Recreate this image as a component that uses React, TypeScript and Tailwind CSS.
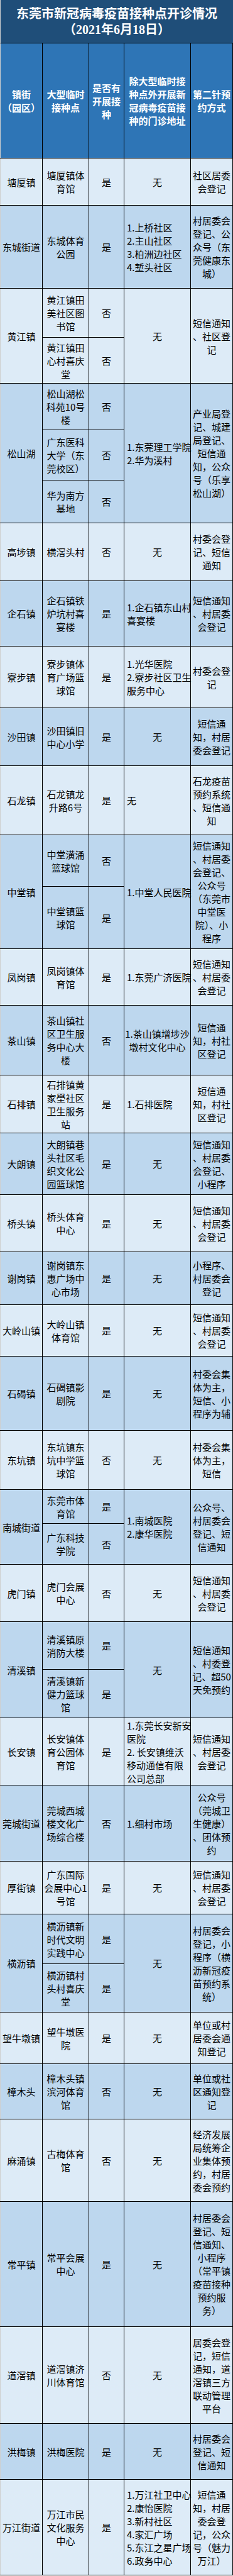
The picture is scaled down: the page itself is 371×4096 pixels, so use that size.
import React from "react";

type Sub = { lines: string[]; open: string; h?: string };
type Town = {
  name: string;
  h: string;
  subs: Sub[];
  addr: string[];
  align?: "left" | "center";
  book: string[];
};

const NONE = ["无"];

const TOWNS: Town[] = [
  { name: "塘厦镇", h: "h-[75px]", subs: [{ lines: ["塘厦镇体", "育馆"], open: "是" }], addr: NONE, book: ["社区居委", "会登记"] },
  {
    name: "东城街道",
    h: "h-[132px]",
    subs: [{ lines: ["东城体育", "公园"], open: "是" }],
    addr: ["1.上桥社区", "2.主山社区", "3.柏洲边社区", "4.堑头社区"],
    align: "left",
    book: ["村居委会", "登记、公", "众号（东", "莞健康东", "城）"],
  },
  {
    name: "黄江镇",
    h: "h-[151px]",
    subs: [
      { lines: ["黄江镇田", "美社区图", "书馆"], open: "否", h: "h-[78px]" },
      { lines: ["黄江镇田", "心村喜庆", "堂"], open: "否" },
    ],
    addr: NONE,
    book: ["短信通知", "、社区登", "记"],
  },
  {
    name: "松山湖",
    h: "h-[222px]",
    subs: [
      { lines: ["松山湖松", "科苑10号", "楼"], open: "否", h: "h-[74px]" },
      { lines: ["广东医科", "大学（东", "莞校区）"], open: "否", h: "h-[80px]" },
      { lines: ["华为南方", "基地"], open: "否" },
    ],
    addr: ["1.东莞理工学院", "2.华为溪村"],
    align: "left",
    book: ["产业局登", "记、城建", "局登记、", "短信通", "知，公众", "号（乐享", "松山湖）"],
  },
  { name: "高埗镇", h: "h-[92px]", subs: [{ lines: ["横滘头村"], open: "否" }], addr: NONE, book: ["村委会登", "记、短信", "通知"] },
  {
    name: "企石镇",
    h: "h-[104px]",
    subs: [{ lines: ["企石镇铁", "炉坑村喜", "宴楼"], open: "是" }],
    addr: ["1.企石镇东山村", "喜宴楼"],
    align: "left",
    book: ["短信通知", "、村居委", "会登记"],
  },
  {
    name: "寮步镇",
    h: "h-[98px]",
    subs: [{ lines: ["寮步镇体", "育广场篮", "球馆"], open: "是" }],
    addr: ["1.光华医院", "2.寮步社区卫生", "服务中心"],
    align: "left",
    book: ["村委会登", "记"],
  },
  { name: "沙田镇", h: "h-[92px]", subs: [{ lines: ["沙田镇旧", "中心小学"], open: "是" }], addr: NONE, book: ["短信通", "知，村居", "委会登记"] },
  {
    name: "石龙镇",
    h: "h-[110px]",
    subs: [{ lines: ["石龙镇龙", "升路6号"], open: "是" }],
    addr: NONE,
    align: "left",
    book: ["石龙疫苗", "预约系统", "、短信通", "知"],
  },
  {
    name: "中堂镇",
    h: "h-[181px]",
    subs: [
      { lines: ["中堂潢涌", "篮球馆"], open: "否", h: "h-[82px]" },
      { lines: ["中堂镇篮", "球馆"], open: "是" },
    ],
    addr: ["1.中堂人民医院"],
    align: "left",
    book: ["短信通知", "、村居委", "会登记、", "公众号", "（东莞市", "中堂医", "院）、小", "程序"],
  },
  {
    name: "凤岗镇",
    h: "h-[90px]",
    subs: [{ lines: ["凤岗镇体", "育馆"], open: "是" }],
    addr: ["1.东莞广济医院"],
    align: "left",
    book: ["短信通知", "、村居委", "会登记"],
  },
  {
    name: "茶山镇",
    h: "h-[111px]",
    subs: [{ lines: ["茶山镇社", "区卫生服", "务中心大", "楼"], open: "否" }],
    addr: ["1.茶山镇增埗沙", "墩村文化中心"],
    book: ["短信通", "知，村社", "区登记"],
  },
  {
    name: "石排镇",
    h: "h-[92px]",
    subs: [{ lines: ["石排镇黄", "家壆社区", "卫生服务", "站"], open: "是" }],
    addr: ["1.石排医院"],
    align: "left",
    book: ["短信通", "知，村社", "区登记"],
  },
  {
    name: "大朗镇",
    h: "h-[98px]",
    subs: [{ lines: ["大朗镇巷", "头社区毛", "织文化公", "园篮球馆"], open: "是" }],
    addr: NONE,
    book: ["短信通知", "、村居委", "会登记、", "小程序"],
  },
  { name: "桥头镇", h: "h-[91px]", subs: [{ lines: ["桥头体育", "中心"], open: "是" }], addr: NONE, book: ["短信通知", "、村居委", "会登记"] },
  { name: "谢岗镇", h: "h-[84px]", subs: [{ lines: ["谢岗镇东", "惠广场中", "心市场"], open: "是" }], addr: NONE, book: ["小程序、", "村居委会", "登记"] },
  { name: "大岭山镇", h: "h-[82px]", subs: [{ lines: ["大岭山镇", "体育馆"], open: "是" }], addr: NONE, book: ["短信通知", "、村居委", "会登记"] },
  { name: "石碣镇", h: "h-[118px]", subs: [{ lines: ["石碣镇影", "剧院"], open: "是" }], addr: NONE, book: ["村委会集", "体为主，", "短信、小", "程序为辅"] },
  { name: "东坑镇", h: "h-[94px]", subs: [{ lines: ["东坑镇东", "坑中学篮", "球馆"], open: "否" }], addr: NONE, book: ["村委会集", "体为主，", "短信"] },
  {
    name: "南城街道",
    h: "h-[119px]",
    subs: [
      { lines: ["东莞市体", "育馆"], open: "是", h: "h-[54px]" },
      { lines: ["广东科技", "学院"], open: "否" },
    ],
    addr: ["1.南城医院", "2.康华医院"],
    align: "left",
    book: ["公众号、", "村居委会", "登记、短", "信通知"],
  },
  { name: "虎门镇", h: "h-[91px]", subs: [{ lines: ["虎门会展", "中心"], open: "否" }], addr: NONE, book: ["短信通知", "、村居委", "会登记"] },
  {
    name: "清溪镇",
    h: "h-[153px]",
    subs: [
      { lines: ["清溪镇原", "消防大楼"], open: "是", h: "h-[76px]" },
      { lines: ["清溪镇新", "健力篮球", "馆"], open: "是" },
    ],
    addr: NONE,
    book: ["短信通知", "、村委登", "记、超50", "天免预约"],
  },
  {
    name: "长安镇",
    h: "h-[107px]",
    subs: [{ lines: ["长安镇体", "育公园体", "育馆"], open: "是" }],
    addr: ["1.东莞长安新安", "医院", "2. 长安镇维沃", "移动通信有限", "公司总部"],
    align: "left",
    book: ["短信通知", "、村居委", "会登记"],
  },
  {
    name: "莞城街道",
    h: "h-[121px]",
    subs: [{ lines: ["莞城西城", "楼文化广", "场综合楼"], open: "否" }],
    addr: ["1.细村市场"],
    align: "left",
    book: ["公众号", "（莞城卫", "生健康）", "、团体预", "约"],
  },
  { name: "厚街镇", h: "h-[84px]", subs: [{ lines: ["广东国际", "会展中心1", "号馆"], open: "是" }], addr: NONE, book: ["短信通知", "、村居委", "会登记"] },
  {
    name: "横沥镇",
    h: "h-[156px]",
    subs: [
      { lines: ["横沥镇新", "时代文明", "实践中心"], open: "是", h: "h-[79px]" },
      { lines: ["横沥镇村", "头村喜庆", "堂"], open: "是" },
    ],
    addr: NONE,
    book: ["村居委会", "登记，小", "程序（横", "沥新冠疫", "苗预约系", "统）"],
  },
  { name: "望牛墩镇", h: "h-[82px]", subs: [{ lines: ["望牛墩医", "院"], open: "是" }], addr: NONE, book: ["单位或村", "居委会通", "知登记"] },
  { name: "樟木头", h: "h-[88px]", subs: [{ lines: ["樟木头镇", "滨河体育", "馆"], open: "否" }], addr: NONE, book: ["单位或社", "区通知登", "记"] },
  {
    name: "麻涌镇",
    h: "h-[131px]",
    subs: [{ lines: ["古梅体育", "馆"], open: "否" }],
    addr: NONE,
    book: ["经济发展", "局统筹企", "业集体预", "约，村居", "委会预约"],
  },
  {
    name: "常平镇",
    h: "h-[199px]",
    subs: [{ lines: ["常平会展", "中心"], open: "是" }],
    addr: NONE,
    book: ["村居委会", "登记、短", "信通知、", "小程序", "（常平镇", "疫苗接种", "预约服", "务）"],
  },
  {
    name: "道滘镇",
    h: "h-[154px]",
    subs: [{ lines: ["道滘镇济", "川体育馆"], open: "否" }],
    addr: NONE,
    book: ["居委会登", "记，短信", "通知，道", "滘镇三方", "联动管理", "平台"],
  },
  { name: "洪梅镇", h: "h-[89px]", subs: [{ lines: ["洪梅医院"], open: "是" }], addr: NONE, book: ["村居委会", "登记、短", "信通知"] },
  {
    name: "万江街道",
    h: "h-[152px]",
    subs: [{ lines: ["万江市民", "文化服务", "中心"], open: "是" }],
    addr: ["1.万江社卫中心", "2.康怡医院", "3.新村社区", "4.家汇广场", "5.东江之星广场", "6.政务中心"],
    align: "left",
    book: ["短信通", "知，村居", "委会登", "记，公众", "号（魅力", "万江）"],
  },
];

const Lines = ({ lines }: { lines: string[] }) => (
  <>
    {lines.map((l, i) => (
      <span key={i} className="block whitespace-nowrap">
        {l}
      </span>
    ))}
  </>
);

function TownRow({ town, dark }: { town: Town; dark: boolean }) {
  return (
    <div className={`flex ${town.h} border-b border-black ${dark ? "bg-[#bdd7ee]" : "bg-[#ddebf7]"}`}>
      <div className="w-[68px] shrink-0 flex items-center justify-center border-l border-l-[#cfcfcf] border-r border-black whitespace-nowrap">
        {town.name}
      </div>
      <div className="w-[130px] shrink-0 flex flex-col">
        {town.subs.map((s, j) => (
          <div
            key={j}
            className={`flex ${s.h ?? "flex-1"} ${j < town.subs.length - 1 ? "border-b border-black" : ""}`}
          >
            <div className="w-[74px] shrink-0 flex flex-col items-center justify-center text-center border-r border-black">
              <Lines lines={s.lines} />
            </div>
            <div className="w-[56px] shrink-0 flex items-center justify-center border-r border-black">
              {s.open}
            </div>
          </div>
        ))}
      </div>
      <div
        className={`w-[106px] shrink-0 flex flex-col justify-center border-r border-black ${
          town.align === "left" ? "items-start pl-[4px]" : "items-center text-center"
        }`}
      >
        <Lines lines={town.addr} />
      </div>
      <div className="w-[67px] shrink-0 flex flex-col items-center justify-center text-center border-r border-black">
        <Lines lines={town.book} />
      </div>
    </div>
  );
}

export default function App() {
  return (
    <div className="w-[371px] font-['Noto_Sans_CJK_SC',sans-serif] text-[15px] leading-[21px] text-black">
      {/* title */}
      <div className="h-[69px] flex flex-col items-center justify-center bg-[#1f4e79] border-b border-black border-l border-l-[#cfcfcf] text-white font-bold text-[20px] leading-[26px]">
        <span>东莞市新冠病毒疫苗接种点开诊情况</span>
        <span className="font-['Liberation_Serif','Noto_Sans_CJK_SC',serif]">（2021年6月18日）</span>
      </div>

      {/* header */}
      <div className="h-[183px] flex bg-[#2e75b6] border-b border-black text-white font-bold">
        <div className="w-[68px] shrink-0 flex flex-col items-center justify-center text-center border-l border-l-[#cfcfcf] border-r border-black">
          <Lines lines={["镇街", "（园区）"]} />
        </div>
        <div className="w-[74px] shrink-0 flex flex-col items-center justify-center text-center border-r border-black">
          <Lines lines={["大型临时", "接种点"]} />
        </div>
        <div className="w-[56px] shrink-0 flex flex-col items-center justify-center text-center border-r border-black">
          <Lines lines={["是否有", "开展接", "种"]} />
        </div>
        <div className="w-[106px] shrink-0 flex flex-col items-center justify-center text-center border-r border-black">
          <Lines lines={["除大型临时接", "种点外开展新", "冠病毒疫苗接", "种的门诊地址"]} />
        </div>
        <div className="w-[67px] shrink-0 flex flex-col items-center justify-center text-center border-r border-black">
          <Lines lines={["第二针预", "约方式"]} />
        </div>
      </div>

      {TOWNS.map((t, i) => (
        <TownRow key={t.name} town={t} dark={i % 2 === 1} />
      ))}
    </div>
  );
}
